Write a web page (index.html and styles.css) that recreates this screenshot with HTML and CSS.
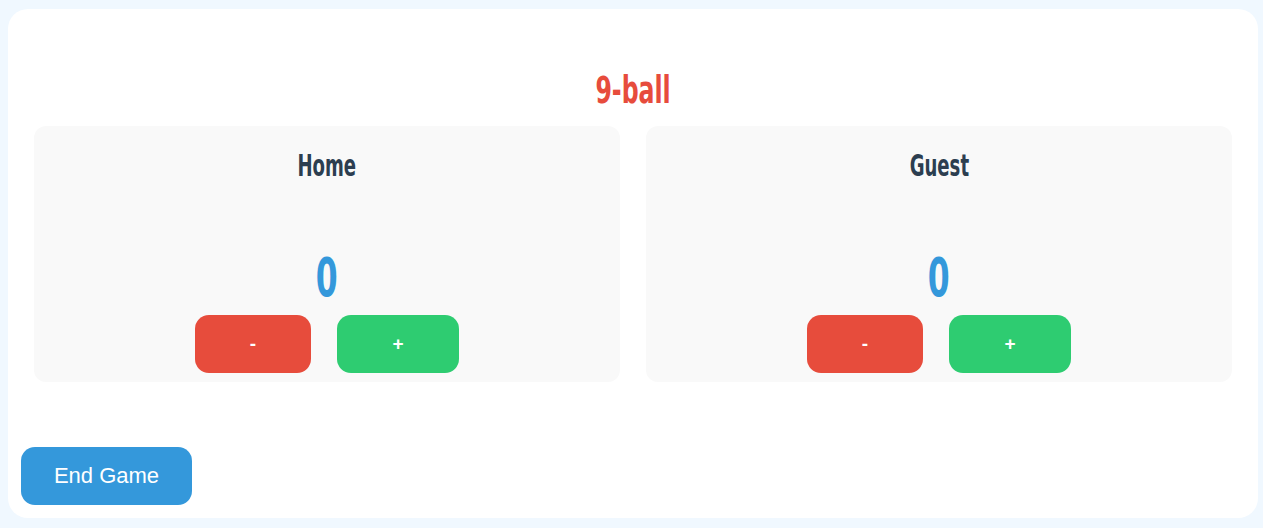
FILE: index.html
```html
<!DOCTYPE html>
<html>
<head>
<meta charset="utf-8">
<link rel="stylesheet" href="styles.css">
</head>
<body>
<div class="app">
  <h1 class="title"><span class="squeeze title-text">9-ball</span></h1>
  <div class="teams">
    <div class="team">
      <h2 class="team-name"><span class="squeeze name-text">Home</span></h2>
      <div class="score"><span class="squeeze score-text">0</span></div>
      <div class="controls">
        <button class="btn minus">-</button>
        <button class="btn plus">+</button>
      </div>
    </div>
    <div class="team">
      <h2 class="team-name"><span class="squeeze name-text">Guest</span></h2>
      <div class="score"><span class="squeeze score-text">0</span></div>
      <div class="controls">
        <button class="btn minus">-</button>
        <button class="btn plus">+</button>
      </div>
    </div>
  </div>
  <div class="footer">
    <button class="end-btn">End Game</button>
  </div>
</div>
</body>
</html>
```

FILE: styles.css
```css
html, body {
  margin: 0;
  padding: 0;
  background: #f0f8ff;
  overflow: hidden;
}
body {
  padding: 9px 5px 10px 8px;
  font-family: "Liberation Sans", Arial, sans-serif;
}
.app {
  width: 1250px;
  height: 509px;
  box-sizing: border-box;
  background: #ffffff;
  border-radius: 20px;
  padding: 0 13px 13px 13px;
  display: flex;
  flex-direction: column;
}
.squeeze {
  display: inline-block;
  font-family: "DejaVu Sans Condensed", "DejaVu Sans", sans-serif;
  font-weight: bold;
}
.title {
  margin: 0;
  padding-top: 62px;
  height: 55px;
  box-sizing: content-box;
  text-align: center;
  font-size: 37px;
  line-height: 40px;
  color: #e74c3c;
}
.title-text {
  transform: scaleX(0.71);
}
.teams {
  display: flex;
  gap: 26px;
  padding: 0 13px;
}
.team {
  flex: 1;
  height: 256px;
  background: #f9f9f9;
  border-radius: 12px;
  display: flex;
  flex-direction: column;
  align-items: center;
}
.team-name {
  margin: 0;
  margin-top: 22px;
  font-size: 30px;
  line-height: 36px;
  color: #2c3e50;
}
.name-text {
  transform: scaleX(0.67);
}
.score {
  margin-top: 64px;
  font-size: 53px;
  line-height: 60px;
  color: #3498db;
}
.score-text {
  transform: scaleX(0.66);
}
.controls {
  margin-top: 7px;
  display: flex;
  gap: 26px;
}
.btn {
  height: 58px;
  border: none;
  border-radius: 14px;
  color: #ffffff;
  font-family: "Liberation Sans", Arial, sans-serif;
  font-weight: bold;
  font-size: 19px;
  padding: 0;
}
.minus {
  width: 116px;
  background: #e74c3c;
}
.plus {
  width: 122px;
  background: #2ecc71;
}
.footer {
  margin-top: auto;
}
.end-btn {
  width: 171px;
  height: 58px;
  border: none;
  border-radius: 14px;
  background: #3498db;
  color: #ffffff;
  font-family: "Liberation Sans", Arial, sans-serif;
  font-size: 22px;
  padding: 0;
}
```
